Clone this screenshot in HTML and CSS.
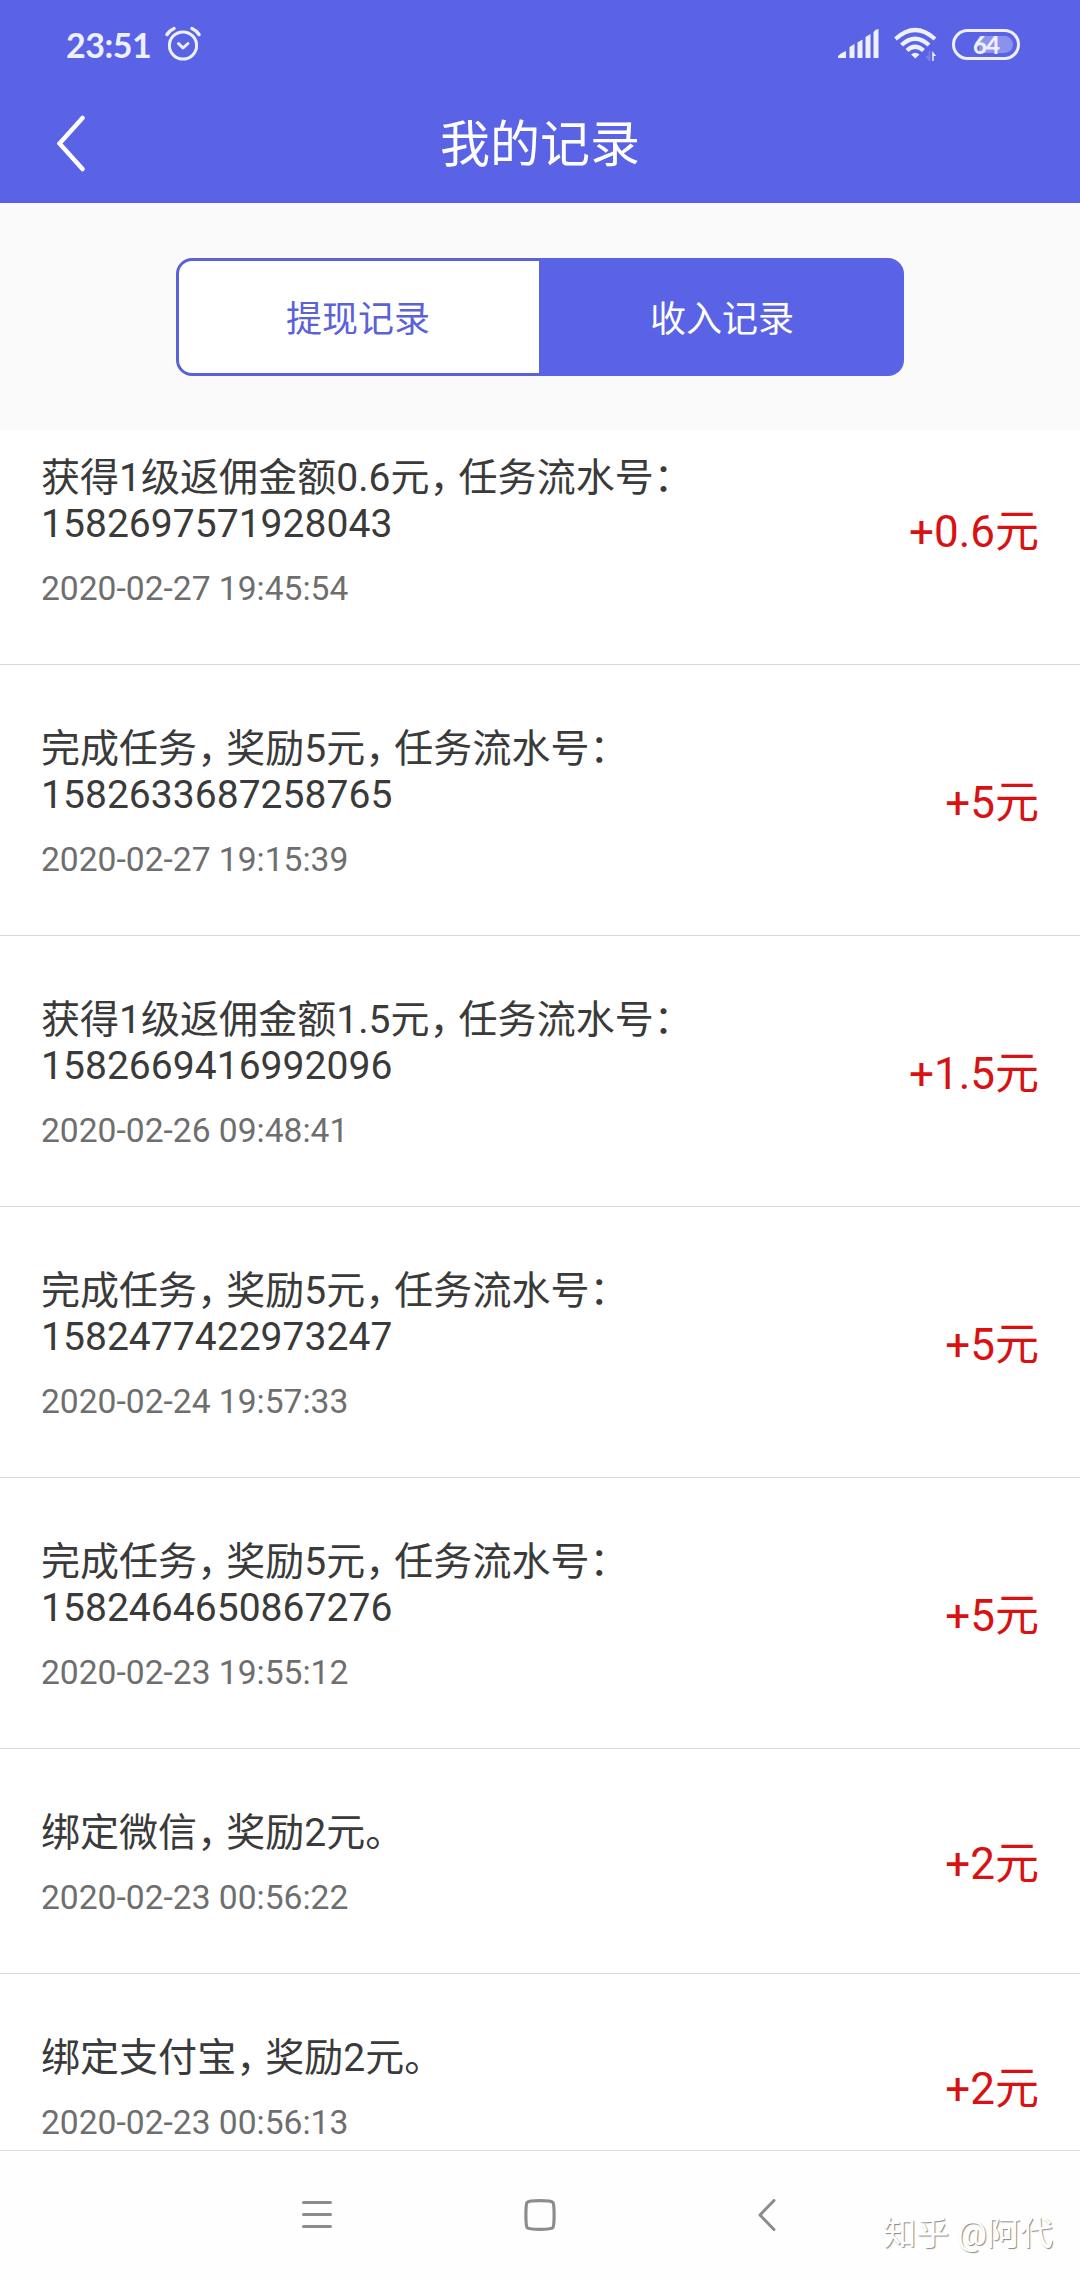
FILE: index.html
```html
<!DOCTYPE html>
<html lang="zh-CN">
<head>
<meta charset="utf-8">
<title>我的记录</title>
<link rel="stylesheet" href="styles.css">
</head>
<body>
<div class="screen">
  <header class="header">
    <div class="status">
      <span class="clock">23:51</span>
      <svg class="alarm" width="36" height="36" viewBox="0 0 36 36" fill="none" stroke="currentColor" stroke-width="3" stroke-linecap="round" stroke-linejoin="round"><circle cx="18" cy="19.500" r="13.600"/><path d="M13.500 17.500l4.500 4.500 5-4.500"/><path d="M2 8.500Q4.500 4.500 9 2.500M27 2.500Q31.500 4.500 34 8.500" stroke-width="3.400"/></svg>
      <span class="spacer"></span>
      <svg class="signal" width="42" height="30" viewBox="0 0 42 30" fill="currentColor"><path d="M0 29v-2q4-4 8-5v7zM11.500 29V18l5-3v14zM19.500 29V13.500l5-3V29zM27.500 29V8l5-3v24zM35.500 29V3q2-3 5-3v29z"/></svg>
      <svg class="wifi" width="44" height="36" viewBox="0 0 44 36" fill="none" stroke="currentColor" stroke-width="4.200"><path d="M1.500 13Q21 -5 41 13M7.500 19Q21 6.500 35 19M13 24.500Q21 17 29.500 24.500"/><path d="M17 28.500Q21 25 25.500 28.500L21.300 32.500z" fill="currentColor" stroke="none"/><path d="M38.200 35V25l4 5h-2.500v5z" fill="currentColor" stroke="none"/><path d="M35.500 25v9l-3-4" stroke-width="1.500" opacity=".25"/></svg>
      <span class="battery"><span class="charge"></span><span class="level">64</span></span>
    </div>
    <div class="bar">
      <svg class="back" width="28" height="58" viewBox="0 0 28 58" fill="none" stroke="#fff" stroke-width="4.500" stroke-linecap="round"><path d="M25.500 3L2.500 28.500 25.500 54"/></svg>
      <h1 class="title">我的记录</h1>
    </div>
  </header>
  <div class="tabs-area">
    <div class="tabs"><span class="tab">提现记录</span><span class="tab active">收入记录</span></div>
  </div>
  <main class="viewport">
    <ul class="list">
      <li class="item"><div class="info"><p class="desc">获得1级返佣金额0.6元<i>，</i>任务流水号：<br>1582697571928043</p><p class="time">2020-02-27 19:45:54</p></div><span class="amount">+0.6元</span></li>
      <li class="item"><div class="info"><p class="desc">完成任务<i>，</i>奖励5元<i>，</i>任务流水号：<br>1582633687258765</p><p class="time">2020-02-27 19:15:39</p></div><span class="amount">+5元</span></li>
      <li class="item"><div class="info"><p class="desc">获得1级返佣金额1.5元<i>，</i>任务流水号：<br>1582669416992096</p><p class="time">2020-02-26 09:48:41</p></div><span class="amount">+1.5元</span></li>
      <li class="item"><div class="info"><p class="desc">完成任务<i>，</i>奖励5元<i>，</i>任务流水号：<br>1582477422973247</p><p class="time">2020-02-24 19:57:33</p></div><span class="amount">+5元</span></li>
      <li class="item"><div class="info"><p class="desc">完成任务<i>，</i>奖励5元<i>，</i>任务流水号：<br>1582464650867276</p><p class="time">2020-02-23 19:55:12</p></div><span class="amount">+5元</span></li>
      <li class="item"><div class="info"><p class="desc">绑定微信<i>，</i>奖励2元。</p><p class="time">2020-02-23 00:56:22</p></div><span class="amount">+2元</span></li>
      <li class="item"><div class="info"><p class="desc">绑定支付宝<i>，</i>奖励2元。</p><p class="time">2020-02-23 00:56:13</p></div><span class="amount">+2元</span></li>
    </ul>
  </main>
  <nav class="nav">
    <svg width="32" height="32" viewBox="0 0 32 32" stroke="#8c8c8c" stroke-width="3" stroke-linecap="round"><path d="M2.500 3.500h27M2.500 15.500h27M2.500 27.500h27"/></svg>
    <svg width="32" height="32" viewBox="0 0 32 32" fill="none" stroke="#8c8c8c" stroke-width="3.200"><path d="M16 1.700c9.500 0 11.500.4 12.900 1.700 1.600 2 1.600 23.200 0 25.200-1.400 1.300-3.400 1.700-12.900 1.700S4.500 29.900 3.100 28.600c-1.600-2-1.600-23.200 0-25.200C4.500 2.100 6.500 1.700 16 1.700z"/></svg>
    <svg width="20" height="32" viewBox="0 0 20 32" fill="none" stroke="#8c8c8c" stroke-width="3" stroke-linecap="round" stroke-linejoin="round"><path d="M17 1.500L3 16 17 30.500"/></svg>
    <span class="watermark">知乎 @阿代</span>
  </nav>
</div>
</body>
</html>
```
FILE: styles.css
```css
* { box-sizing: border-box; }
body, h1, p, ul { margin: 0; padding: 0; }
body { font-family: Roboto, "Noto Sans CJK SC", sans-serif; background: #fff; }
i { font-style: normal; letter-spacing: -10px; }
svg { display: block; flex: none; }

.screen { width: 1080px; height: 2280px; display: flex; flex-direction: column; overflow: hidden; position: relative; }

.header { height: 203px; flex: none; background: #5a62e6; }
.status { height: 88px; padding: 0 60px 0 66px; display: flex; align-items: center; color: #eeefff; }
.clock { font: 700 34px/40px Lato, sans-serif; letter-spacing: -.5px; width: 82px; white-space: nowrap; padding-top: 1px; }
.alarm { margin-left: 17px; }
.spacer { flex: 1; }
.wifi { margin-left: 14px; }
.battery { width: 68px; height: 31px; margin-left: 14px; border: 3px solid currentColor; border-radius: 16px; display: grid; place-items: center; }
.battery > * { grid-area: 1 / 1; }
.charge { width: 34px; height: 17px; border-radius: 2px 9px 9px 2px; background: rgba(255,255,255,.3); justify-self: end; margin-right: 4px; }
.level { font: 900 24px/25px Lato, sans-serif; letter-spacing: -1px; }
.bar { height: 111px; padding: 0 57px; display: grid; grid-template-columns: 28px 1fr 28px; align-items: center; }
.title { padding-top: 3px; color: #fff; font-size: 50px; font-weight: 400; line-height: 60px; text-align: center; }

.tabs-area { height: 227px; flex: none; padding-top: 55px; background: #fafafa; }
.tabs { width: 728px; height: 118px; margin: 0 auto; display: grid; grid-template-columns: 1fr 1fr; }
.tab { display: flex; align-items: center; justify-content: center; padding: 0 2px 2px 0; border: 3px solid #5a62d6; border-right-width: 1px; border-radius: 16px 0 0 16px; background: #fff; font-size: 36px; color: #5a62d6; }
.tab.active { padding-right: 0; border: 0; border-radius: 0 16px 16px 0; background: #5a62e6; color: #fff; }

.viewport { flex: 1; min-height: 0; overflow: hidden; }
.list { list-style: none; margin-top: -36px; }
.item { display: flex; justify-content: space-between; align-items: center; padding: 61px 41px 55px 41px; border-bottom: 1px solid #d9d9d9; }
.desc { font-size: 39px; line-height: 46px; letter-spacing: .04px; color: #3a3a3a; white-space: nowrap; }
.time { margin-top: 22px; font-size: 33.6px; line-height: 40px; color: #6e6e6e; }
.amount { font-size: 44px; line-height: 52px; color: #d81212; }

.nav { height: 130px; flex: none; padding: 0 303px 1px 301px; border-top: 1px solid #dcdcdc; background: #fefefe; display: grid; grid-template-columns: 207px 1fr 20px; column-gap: 16px; align-items: center; position: relative; }
.watermark { position: absolute; right: 27px; bottom: 24px; font-size: 33px; line-height: 44px; color: #fff; text-shadow: 1px 1px 1px #888; white-space: nowrap; }
```
